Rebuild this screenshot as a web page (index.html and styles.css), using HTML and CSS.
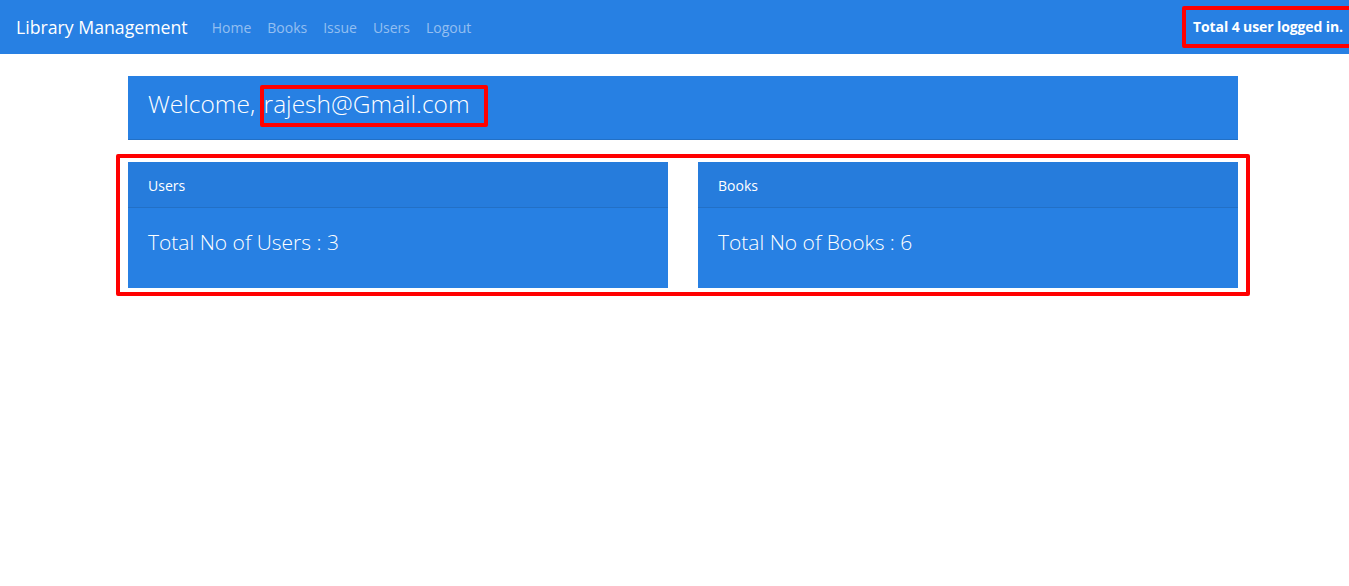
FILE: index.html
```html
<!DOCTYPE html>
<html lang="en">
<head>
<meta charset="utf-8">
<title>Library Management</title>
<link rel="stylesheet" href="styles.css">
</head>
<body>
<nav class="navbar">
  <a class="brand" href="#">Library Management</a>
  <ul class="nav-links">
    <li><a href="#">Home</a></li>
    <li><a href="#">Books</a></li>
    <li><a href="#">Issue</a></li>
    <li><a href="#">Users</a></li>
    <li><a href="#">Logout</a></li>
  </ul>
  <span class="logged-in highlight">Total 4 user logged in.</span>
</nav>
<main class="container">
  <div class="welcome">
    <h1 class="welcome-text">Welcome, <span class="email highlight">rajesh@Gmail.com</span></h1>
  </div>
  <div class="cards highlight">
    <section class="card">
      <div class="card-header">Users</div>
      <div class="card-body">Total No of Users : 3</div>
    </section>
    <section class="card">
      <div class="card-header">Books</div>
      <div class="card-body">Total No of Books : 6</div>
    </section>
  </div>
</main>
</body>
</html>
```
FILE: styles.css
```css
html {
  overflow: hidden;
}
html, body {
  margin: 0;
  padding: 0;
}
body {
  font-family: "Open Sans", "Noto Sans", sans-serif;
  color: #fff;
  background: #fff;
  width: 1366px;
}
a { text-decoration: none; }

.highlight {
  border: 4px solid #ff0000;
  border-radius: 2px;
}

.navbar {
  height: 54px;
  background: #2780e3;
  display: flex;
  align-items: center;
  padding: 0 0 0 16px;
  box-sizing: border-box;
  white-space: nowrap;
}
.brand {
  color: #fff;
  font-size: 17.7px;
  margin-right: 16px;
}
.nav-links {
  list-style: none;
  display: flex;
  margin: 0;
  padding: 0;
  flex: 1;
}
.nav-links a {
  display: block;
  padding: 8px 8px;
  font-size: 14px;
  color: rgba(255, 255, 255, 0.5);
}
.logged-in {
  font-weight: bold;
  font-size: 14px;
  letter-spacing: -0.1px;
  padding: 7px 8px 8px 7px;
  margin-right: 11px;
  color: #fff;
}

.container {
  width: 1110px;
  margin: 22px auto 0;
}
.welcome {
  background: #2780e3;
  border-bottom: 1px solid #2270c6;
  height: 64px;
  box-sizing: border-box;
  display: flex;
  align-items: center;
  padding: 0 0 3px 20px;
}
.welcome-text {
  margin: 0;
  font-weight: 300;
  font-size: 24.5px;
  line-height: 34px;
}
.email {
  display: inline-block;
  padding: 1px 14px 5px 0;
  margin-left: -2px;
  line-height: 28px;
}

.cards {
  margin: 14px -12px 0;
  padding: 4px 8px;
  display: grid;
  grid-template-columns: 1fr 1fr;
  gap: 30px;
}
.card {
  background: #2780e3;
}
.card-header {
  height: 46px;
  box-sizing: border-box;
  background: #267cdc;
  border-bottom: 1px solid #2270c6;
  padding: 2px 0 0 20px;
  display: flex;
  align-items: center;
  font-size: 14px;
}
.card-body {
  height: 80px;
  padding-left: 20px;
  display: flex;
  align-items: center;
  font-size: 21px;
  font-weight: 300;
  box-sizing: border-box;
  padding-bottom: 12px;
}
```
